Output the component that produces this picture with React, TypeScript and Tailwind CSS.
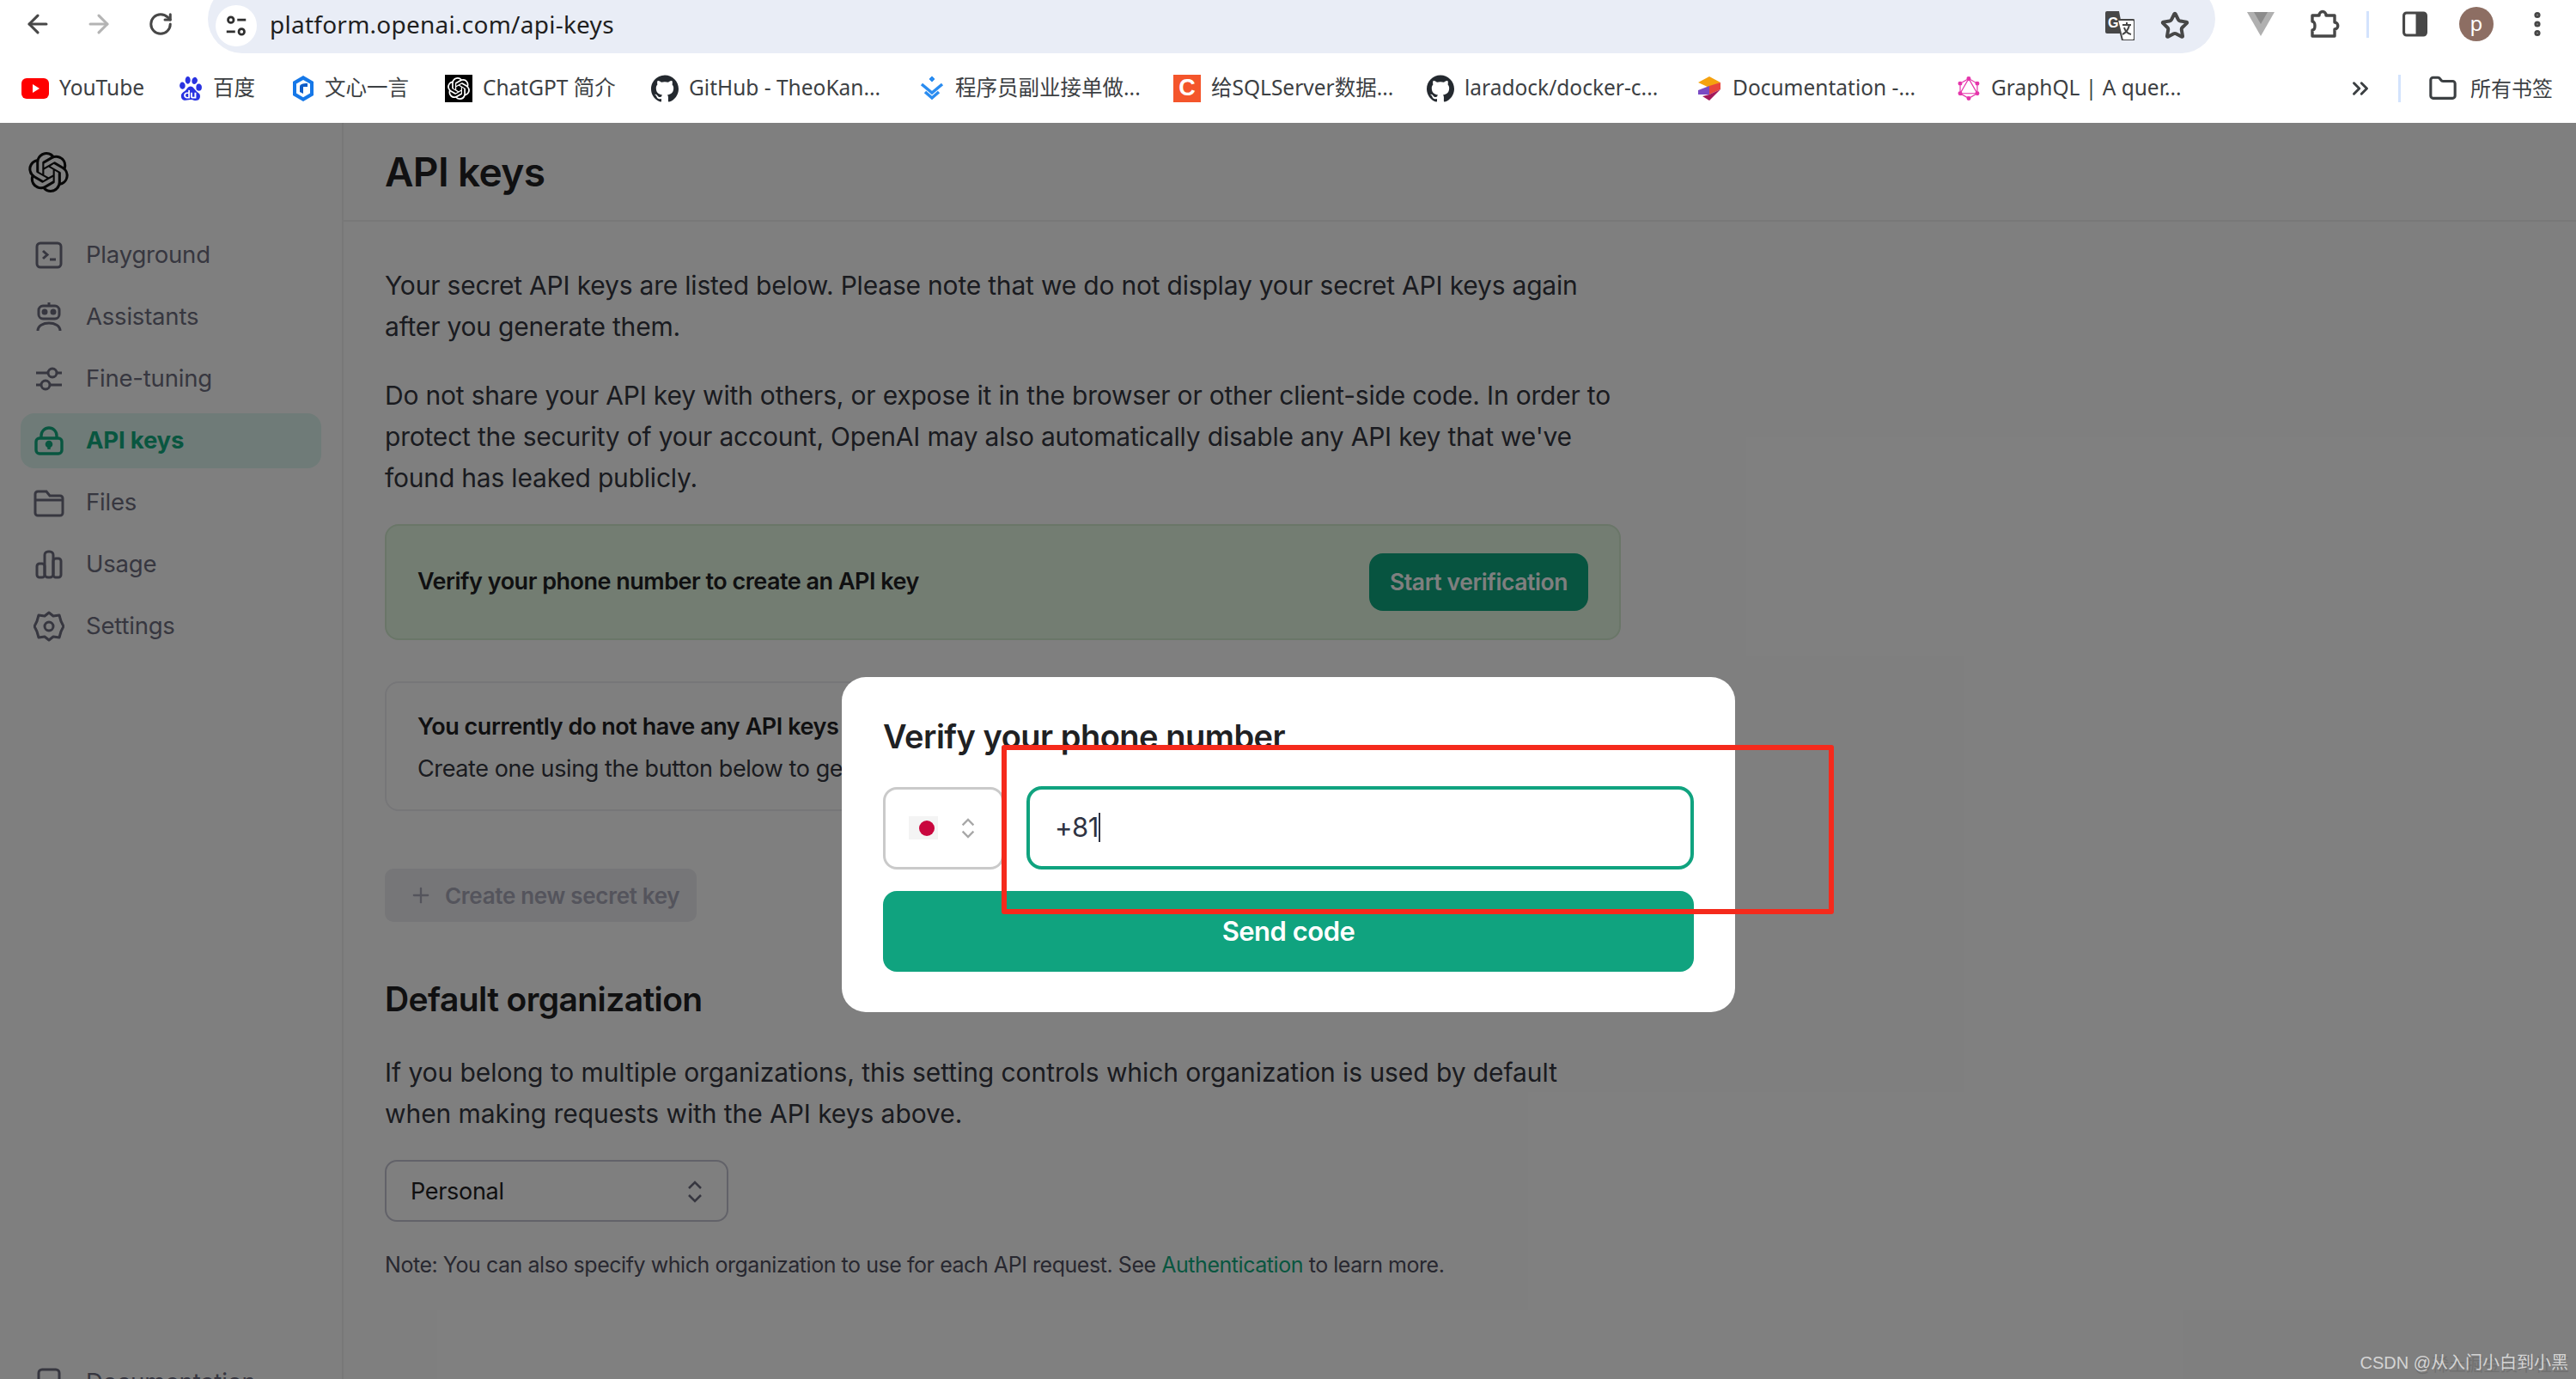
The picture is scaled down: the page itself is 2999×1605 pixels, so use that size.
import { ChevronsRight, EllipsisVertical, Folder, Plus, RotateCw, ArrowLeft, ArrowRight, Star } from "lucide-react";
import { ReactNode } from "react";
import { SiBaidu, SiGithub, SiGraphql, SiOpenai } from "react-icons/si";

const sohne = "font-['Inter','Liberation_Sans',sans-serif]";

function YoutubeIcon() {
  return (
    <svg viewBox="0 0 32 24" className="h-[24px] w-[32px]">
      <rect width="32" height="24" rx="6" fill="#f00" />
      <path d="M13 7l8 5-8 5z" fill="#fff" />
    </svg>
  );
}

function WenxinIcon() {
  return (
    <svg viewBox="0 0 26 32" className="h-[32px] w-[26px]">
      <path d="M13 1l12 7v16l-12 7-12-7V8z" fill="#1678e8" />
      <path d="M13 6l8 4.600v11l-8 4.600-8-4.600v-11z" fill="#fff" />
      <path d="M9 14c0-3 3-4 9-4v4h-5v8l-4-2z" fill="#0e5cc8" />
    </svg>
  );
}

function TaskIcon() {
  return (
    <svg viewBox="0 0 30 30" className="h-[30px] w-[30px]" fill="none" stroke="#2a8cf0" strokeWidth="3.500">
      <path d="M15 1l3 3-3 3-3-3z" fill="#2a8cf0" strokeWidth="1" />
      <path d="M3 10l12 10 12-10" />
      <path d="M7 19l8 7 8-7" />
    </svg>
  );
}

function CsdnIcon() {
  return (
    <div className="flex h-[32px] w-[32px] items-center justify-center bg-[#f4552b] text-[27px] leading-none font-semibold text-white font-['Liberation_Sans',sans-serif]">
      C
    </div>
  );
}

function StackIcon() {
  return (
    <svg viewBox="0 0 30 30" className="h-[30px] w-[30px]">
      <path d="M15 1l13 7-13 6-13-6z" fill="#f5a20f" />
      <path d="M15 12l13-4v8l-13 6z" fill="#e8453c" />
      <path d="M2 17l13-5v10L2 22z" fill="#7a4bc4" />
      <path d="M15 22l13-6-13 13-8-5z" fill="#a3195b" />
    </svg>
  );
}

const bookmarks: { label: string; icon: ReactNode; slot: string }[] = [
  { label: "YouTube", icon: <YoutubeIcon />, slot: "w-[183px]" },
  { label: "百度", icon: <SiBaidu className="h-[30px] w-[28px] text-[#2932e1]" />, slot: "w-[132px]" },
  { label: "文心一言", icon: <WenxinIcon />, slot: "w-[178px]" },
  {
    label: "ChatGPT 简介",
    icon: (
      <div className="flex h-[32px] w-[32px] items-center justify-center bg-black">
        <SiOpenai className="h-[26px] w-[26px] text-white" />
      </div>
    ),
    slot: "w-[240px]",
  },
  { label: "GitHub - TheoKan...", icon: <SiGithub className="h-[32px] w-[32px] text-[#24292f]" />, slot: "w-[312px]" },
  { label: "程序员副业接单做...", icon: <TaskIcon />, slot: "w-[296px]" },
  { label: "给SQLServer数据...", icon: <CsdnIcon />, slot: "w-[295px]" },
  { label: "laradock/docker-c...", icon: <SiGithub className="h-[32px] w-[32px] text-[#24292f]" />, slot: "w-[314px]" },
  { label: "Documentation -...", icon: <StackIcon />, slot: "w-[303px]" },
  { label: "GraphQL | A quer...", icon: <SiGraphql className="h-[30px] w-[28px] text-[#e535ab]" />, slot: "w-[465px]" },
];

function BrowserChrome() {
  return (
    <div className="h-[143px] bg-white text-[#3c4043] font-['Noto_Sans','Noto_Sans_CJK_SC',sans-serif]">
      <div className="flex h-[62px] items-start overflow-hidden">
        <div className="flex h-[62px] w-[242px] items-center pb-[6px] pl-[27px] text-[#474747]">
          <ArrowLeft className="h-[34px] w-[34px]" strokeWidth={2.2} />
          <ArrowRight className="ml-[37px] h-[34px] w-[34px] text-[#b4b4b4]" strokeWidth={2.2} />
          <RotateCw className="ml-[40px] h-[30px] w-[30px]" strokeWidth={2.4} />
        </div>
        <div className="-mt-[18px] flex h-[80px] w-[2337px] shrink-0 items-center rounded-full bg-[#e9edf6] pt-[16px] pl-[9px]">
          <div className="flex h-[48px] w-[48px] items-center justify-center rounded-full bg-white">
            <svg viewBox="0 0 24 24" className="h-[30px] w-[30px]" fill="none" stroke="#2f2f2f" strokeWidth="2.200">
              <circle cx="7" cy="6.500" r="2.600" />
              <path d="M13 6.500h8M3 17.500h8" />
              <circle cx="17" cy="17.500" r="2.600" />
            </svg>
          </div>
          <span className="ml-[15px] -translate-y-[2px] text-[28px] leading-none tracking-[0.25px] text-[#1f1f1f]">platform.openai.com/api-keys</span>
          <div className="ml-auto flex items-center pr-[30px]">
            <svg viewBox="0 0 34 34" className="h-[34px] w-[34px]">
              <path d="M2 0h14l5 26H2a2 2 0 0 1-2-2V2a2 2 0 0 1 2-2z" fill="#474747" />
              <path d="M14 10h18a2 2 0 0 1 2 2v20a2 2 0 0 1-2 2H20z" fill="#fff" stroke="#474747" strokeWidth="2" />
              <path d="M20 16h10M25 13v3M28 16c-1 5-4 9-8 11M22 19c1 4 4 7 8 8" fill="none" stroke="#474747" strokeWidth="2" />
              <text x="3" y="19" fontSize="16" fontWeight="700" fill="#fff" fontFamily="Liberation Sans">G</text>
            </svg>
            <Star className="ml-[30px] h-[34px] w-[34px] text-[#474747]" strokeWidth={2.8} />
          </div>
        </div>
        <div className="flex h-[62px] flex-1 items-center pb-[6px] text-[#474747]">
          <svg viewBox="0 0 32 28" className="ml-[37px] h-[28px] w-[32px]">
            <path d="M0 0h32L16 28z" fill="#b0b0b0" />
            <path d="M8 0h16L16 14z" fill="#8c8c8c" />
          </svg>
          <svg viewBox="0 0 36 36" className="ml-[40px] h-[36px] w-[36px]" fill="none" stroke="#474747" strokeWidth="3.400" strokeLinejoin="round">
            <path d="M4 8h8c0-6 8-6 8 0h10v8c5 0 5 8 0 8v8H4v-7c4 0 4-10 0-10z" />
          </svg>
          <div className="ml-[31px] h-[31px] w-[3px] bg-[#d3e3fd]" />
          <svg viewBox="0 0 28 28" className="ml-[39px] h-[30px] w-[29px]">
            <rect x="1.500" y="1.500" width="25" height="25" rx="3" fill="#fff" stroke="#474747" strokeWidth="3" />
            <rect x="15" y="1.500" width="11.500" height="25" fill="#474747" />
          </svg>
          <div className="ml-[37px] flex h-[40px] w-[40px] items-center justify-center rounded-full bg-[#8d6e63] pb-[3px] text-[24px] leading-none text-white">p</div>
          <EllipsisVertical className="ml-[33px] h-[36px] w-[36px]" strokeWidth={2.8} />
        </div>
      </div>
      <div className="flex h-[81px] items-center pl-[25px]">
        {bookmarks.map((b) => (
          <div key={b.label} className={`flex shrink-0 items-center gap-[12px] ${b.slot}`}>
            {b.icon}
            <span className="text-[24.5px] leading-none whitespace-nowrap">{b.label}</span>
          </div>
        ))}
        <ChevronsRight className="-ml-[10px] h-[30px] w-[30px]" strokeWidth={2.4} />
        <div className="ml-[29px] h-[32px] w-[3px] bg-[#d3e3fd]" />
        <Folder className="ml-[32px] h-[34px] w-[34px]" strokeWidth={2.2} />
        <span className="ml-[15px] text-[24px] leading-none">所有书签</span>
      </div>
    </div>
  );
}

const iconClass = "h-[36px] w-[36px] shrink-0";

const navIcons: Record<string, ReactNode> = {
  Playground: (
    <svg viewBox="0 0 36 36" className={iconClass} fill="none" stroke="currentColor" strokeWidth="3">
      <rect x="4" y="4" width="28" height="28" rx="4" />
      <path d="M11 13l5 4.500-5 4.500M19 23h7" />
    </svg>
  ),
  Assistants: (
    <svg viewBox="0 0 36 36" className={iconClass} fill="none" stroke="currentColor" strokeWidth="3">
      <path d="M18 1v4" />
      <rect x="6" y="5" width="24" height="15" rx="5" />
      <circle cx="13" cy="12" r="2" fill="currentColor" />
      <circle cx="23" cy="12" r="2" fill="currentColor" />
      <path d="M5 34c0-12 26-12 26 0" />
    </svg>
  ),
  "Fine-tuning": (
    <svg viewBox="0 0 36 36" className={iconClass} fill="none" stroke="currentColor" strokeWidth="3">
      <path d="M3 11h14M27 11h6M3 25h6M19 25h14" />
      <circle cx="22" cy="11" r="5" />
      <circle cx="14" cy="25" r="5" />
    </svg>
  ),
  "API keys": (
    <svg viewBox="0 0 36 36" className={iconClass} fill="none" stroke="currentColor" strokeWidth="3.400">
      <rect x="3" y="15" width="30" height="18" rx="4" />
      <path d="M9 15v-3a9 9 0 0 1 18 0v3" />
      <circle cx="18" cy="22" r="2.600" fill="currentColor" />
      <path d="M18 23v5" />
    </svg>
  ),
  Files: (
    <svg viewBox="0 0 36 36" className={iconClass} fill="none" stroke="currentColor" strokeWidth="3">
      <path d="M2 8a3 3 0 0 1 3-3h10l4 5h12a3 3 0 0 1 3 3v17a3 3 0 0 1-3 3H5a3 3 0 0 1-3-3z" />
      <path d="M2 15h32" />
    </svg>
  ),
  Usage: (
    <svg viewBox="0 0 36 36" className={iconClass} fill="none" stroke="currentColor" strokeWidth="3">
      <rect x="4" y="17" width="9" height="16" rx="3" />
      <rect x="13" y="3" width="10" height="30" rx="4" />
      <rect x="23" y="11" width="9" height="22" rx="3" />
    </svg>
  ),
  Settings: (
    <svg viewBox="0 0 36 36" className={iconClass} fill="none" stroke="currentColor" strokeWidth="3" strokeLinejoin="round">
      <path d="M18 2l5 4 7-1 2 7 3 6-3 6-2 7-7-1-5 4-5-4-7 1-2-7-3-6 3-6 2-7 7 1z" />
      <circle cx="18" cy="18" r="5" />
    </svg>
  ),
};

function Sidebar() {
  const items = ["Playground", "Assistants", "Fine-tuning", "API keys", "Files", "Usage", "Settings"];
  return (
    <aside className="flex w-[400px] shrink-0 flex-col overflow-hidden border-r-2 border-[#f0f0f0] bg-white px-[24px] pt-[34px]">
      <SiOpenai className="ml-[9px] h-[47px] w-[47px] shrink-0 text-[#111]" />
      <nav className="mt-[41px] flex shrink-0 flex-col gap-[8px]">
        {items.map((item) => {
          const active = item === "API keys";
          return (
            <div
              key={item}
              className={`flex h-[64px] items-center gap-[25px] rounded-[16px] pl-[15px] text-[27.5px] ${
                active ? "bg-[#def6f1] font-bold text-[#12ad80]" : "text-[#6e6e80]"
              }`}
            >
              {navIcons[item]}
              <span className="tracking-[-0.2px]">{item}</span>
            </div>
          );
        })}
      </nav>
      <div className="mt-[816px] flex h-[64px] shrink-0 items-center gap-[25px] pl-[15px] text-[27.5px] text-[#6e6e80]">
        <svg viewBox="0 0 36 36" className={iconClass} fill="none" stroke="currentColor" strokeWidth="3">
          <rect x="6" y="3" width="24" height="30" rx="4" />
        </svg>
        <span>Documentation</span>
      </div>
    </aside>
  );
}

function MainContent() {
  return (
    <main className="flex-1 overflow-hidden bg-white text-[#353740]">
      <div className="flex h-[115px] items-center border-b-2 border-[#f0f0f0] pl-[48px]">
        <h1 className="text-[46px] leading-none font-semibold tracking-[-0.6px] text-[#202123]">API keys</h1>
      </div>
      <div className="w-[1487px] pt-[50px] pl-[48px]">
        <p className="text-[30px] leading-[48px] tracking-[-0.2px] whitespace-nowrap">
          Your secret API keys are listed below. Please note that we do not display your secret API keys again
          <br />
          after you generate them.
        </p>
        <p className="mt-[32px] text-[30px] leading-[48px] tracking-[-0.2px] whitespace-nowrap">
          Do not share your API key with others, or expose it in the browser or other client-side code. In order to
          <br />
          protect the security of your account, OpenAI may also automatically disable any API key that we've
          <br />
          found has leaked publicly.
        </p>
        <div className="mt-[30px] flex h-[135px] items-center justify-between rounded-[16px] border-2 border-[#d4ecd1] bg-[#e6fae5] pr-[36px] pl-[36px]">
          <span className="text-[27px] font-semibold tracking-[-0.5px] text-[#202123]">Verify your phone number to create an API key</span>
          <button className="h-[67px] w-[255px] rounded-[16px] bg-[#0ea880] text-[26.5px] font-semibold tracking-[-0.4px] text-white">Start verification</button>
        </div>
        <div className="mt-[48px] flex h-[151px] flex-col justify-center rounded-[16px] border-2 border-[#ececf1] pt-[3px] pl-[36px]">
          <span className="text-[27px] leading-[49px] font-semibold tracking-[-0.45px] text-[#202123]">You currently do not have any API keys</span>
          <span className="text-[27px] leading-[49px] tracking-[-0.4px]">Create one using the button below to get started</span>
        </div>
        <button className="mt-[67px] flex h-[62px] w-[363px] items-center rounded-[10px] bg-[#ececf1] pl-[28px] text-[26px] font-semibold tracking-[-0.3px] text-[#a9a9b8]">
          <Plus className="h-[28px] w-[28px]" strokeWidth={2} />
          <span className="ml-[14px]">Create new secret key</span>
        </button>
        <h2 className="mt-[65px] text-[39px] leading-[50px] font-semibold tracking-[-0.6px] text-[#202123]">Default organization</h2>
        <p className="mt-[36px] text-[30px] leading-[48px] tracking-[-0.07px] whitespace-nowrap">
          If you belong to multiple organizations, this setting controls which organization is used by default
          <br />
          when making requests with the API keys above.
        </p>
        <div className="mt-[30px] flex h-[72px] w-[400px] items-center justify-between rounded-[14px] border-2 border-[#c5c5d2] pt-[2px] pr-[26px] pl-[28px] text-[#202123]">
          <span className="text-[27px] tracking-[-0.3px]">Personal</span>
          <UpDown className="h-[28px] w-[22px] text-[#6e6e80]" />
        </div>
        <p className="mt-[34px] text-[25px] leading-[32px] tracking-[-0.45px] whitespace-nowrap text-[#505060]">
          Note: You can also specify which organization to use for each API request. See{" "}
          <span className="text-[#12ad80]">Authentication</span> to learn more.
        </p>
      </div>
    </main>
  );
}

function UpDown({ className }: { className: string }) {
  return (
    <svg viewBox="0 0 22 28" className={className} fill="none" stroke="currentColor" strokeWidth="2.600">
      <path d="M4 10l7-7 7 7M4 18l7 7 7-7" />
    </svg>
  );
}

function PhoneDialog() {
  return (
    <div className="relative ml-[980px] h-[390px] w-[1040px] rounded-[28px] bg-white px-[48px] pt-[45px]">
      <h3 className="text-[38px] leading-[48px] font-semibold tracking-[-0.5px] text-[#202123]">Verify your phone number</h3>
      <div className="mt-[34px] flex items-center gap-[26px]">
        <div className="flex h-[96px] w-[141px] shrink-0 items-center rounded-[16px] border-[3px] border-[#cacaca] pl-[27px]">
          <div className="flex h-[27px] w-[34px] items-center justify-end bg-[#f4f4f4] pr-[4px]">
            <div className="h-[18px] w-[18px] rounded-full bg-[#c9073e]" />
          </div>
          <UpDown className="ml-[25px] h-[26px] w-[20px] text-[#a8a8a8]" />
        </div>
        <div className="flex h-[97px] w-[780px] items-center rounded-[18px] border-4 border-[#10a37f] pb-[2px] pl-[29px] text-[#2f3342]">
          <span className="text-[31px] leading-none tracking-[-0.5px]">+81</span>
          <div className="h-[34px] w-[2px] bg-[#2f3342]" />
        </div>
      </div>
      <button className="mt-[25px] h-[94px] w-[944px] rounded-[16px] bg-[#10a37f] text-[31px] font-semibold tracking-[-0.5px] text-white">Send code</button>
      <div className="absolute top-[79px] left-[186px] h-[197px] w-[969px] rounded-[3px] border-[6px] border-[#f52a1c]" />
    </div>
  );
}

export default function App() {
  return (
    <div className={`relative h-[1605px] w-[2999px] overflow-hidden ${sohne}`}>
      <BrowserChrome />
      <div className="flex h-[1462px]">
        <Sidebar />
        <MainContent />
      </div>
      <div className="absolute inset-x-0 top-[143px] bottom-0 bg-black/50 pt-[645px]">
        <PhoneDialog />
      </div>
      <div className="absolute right-[8px] bottom-[6px] text-[20px] leading-none text-[#707070] font-['Liberation_Sans','Noto_Sans_CJK_SC',sans-serif]">
        @稀土掘金技术社区
      </div>
      <div className="absolute right-[9px] bottom-[9px] text-[20px] leading-none text-[#d4d4d4] font-['Liberation_Sans','Noto_Sans_CJK_SC',sans-serif]">
        CSDN @从入门小白到小黑
      </div>
    </div>
  );
}
